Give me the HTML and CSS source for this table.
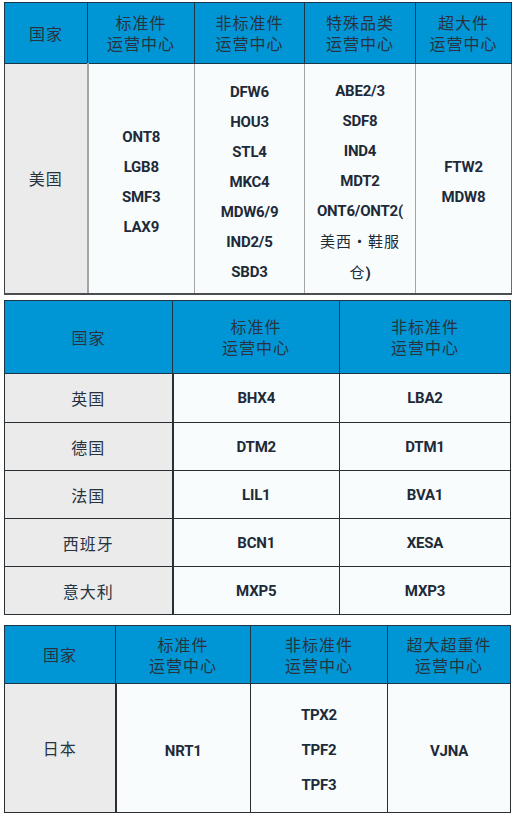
FILE: index.html
```html
<!DOCTYPE html>
<html lang="zh">
<head>
<meta charset="utf-8">
<link rel="stylesheet" href="styles.css">
</head>
<body>
<table class="tbl t1">
  <colgroup><col class="c83"><col class="c107"><col class="c110"><col class="c111"><col class="c96"></colgroup>
  <thead>
    <tr><th>国家</th><th>标准件<br>运营中心</th><th>非标准件<br>运营中心</th><th>特殊品类<br>运营中心</th><th>超大件<br>运营中心</th></tr>
  </thead>
  <tbody>
    <tr>
      <td class="country">美国</td>
      <td class="code">ONT8<br>LGB8<br>SMF3<br>LAX9</td>
      <td class="code">DFW6<br>HOU3<br>STL4<br>MKC4<br>MDW6/9<br>IND2/5<br>SBD3</td>
      <td class="code">ABE2/3<br>SDF8<br>IND4<br>MDT2<br>ONT6/ONT2(<br><span class="cjk">美西・鞋服</span><br><span class="cjk">仓</span>)</td>
      <td class="code">FTW2<br>MDW8</td>
    </tr>
  </tbody>
</table>

<table class="tbl t2">
  <colgroup><col class="c168"><col class="c167"><col class="c171"></colgroup>
  <thead>
    <tr><th>国家</th><th>标准件<br>运营中心</th><th>非标准件<br>运营中心</th></tr>
  </thead>
  <tbody>
    <tr class="r49"><td class="country">英国</td><td class="code">BHX4</td><td class="code">LBA2</td></tr>
    <tr class="r48"><td class="country">德国</td><td class="code">DTM2</td><td class="code">DTM1</td></tr>
    <tr class="r48"><td class="country">法国</td><td class="code">LIL1</td><td class="code">BVA1</td></tr>
    <tr class="r48"><td class="country">西班牙</td><td class="code">BCN1</td><td class="code">XESA</td></tr>
    <tr class="r48"><td class="country">意大利</td><td class="code">MXP5</td><td class="code">MXP3</td></tr>
  </tbody>
</table>

<table class="tbl t3">
  <colgroup><col class="c111"><col class="c135"><col class="c137"><col class="c123"></colgroup>
  <thead>
    <tr><th>国家</th><th>标准件<br>运营中心</th><th>非标准件<br>运营中心</th><th>超大超重件<br>运营中心</th></tr>
  </thead>
  <tbody>
    <tr class="r130">
      <td class="country">日本</td>
      <td class="code">NRT1</td>
      <td class="code tall">TPX2<br>TPF2<br>TPF3</td>
      <td class="code">VJNA</td>
    </tr>
  </tbody>
</table>
</body>
</html>
```

FILE: styles.css
```css
html, body {
  margin: 0;
  padding: 0;
  background: #ffffff;
}
body {
  padding: 2px 3px 0 4px;
  font-family: "Noto Sans CJK SC", sans-serif;
}
.tbl {
  width: 507px;
  border-collapse: collapse;
  table-layout: fixed;
  border: 1px solid #3a3f44;
}
.t2 {
  width: 506px;
  margin-top: 5px;
}
.t3 {
  width: 506px;
  margin-top: 10px;
}
.c83 { width: 83px; }
.c107 { width: 107px; }
.c110 { width: 110px; }
.c111 { width: 111px; }
.c96 { width: 96px; }
.c168 { width: 168px; }
.c167 { width: 167px; }
.c171 { width: 171px; }
.c135 { width: 135px; }
.c137 { width: 137px; }
.c123 { width: 123px; }

.tbl th {
  background: #0096d5;
  color: #27333f;
  font-family: "Noto Sans CJK SC", sans-serif;
  font-weight: 400;
  font-size: 16px;
  line-height: 21px;
  letter-spacing: 1px;
  text-align: center;
  vertical-align: middle;
  padding: 0;
  border: 1px solid #1d3646;
}
.t1 th { height: 60px; }
.t2 th { height: 72px; }
.t3 th { height: 57px; }

.tbl td {
  text-align: center;
  vertical-align: middle;
  padding: 0;
  border: 1px solid #2a2f34;
  background: #f8fcfd;
}
.t1 td {
  border: 1px solid #a4a4a4;
  border-bottom: 2px solid #4a4d50;
  padding: 12px 0 5px;
}
.t1 td.country { padding: 8px 0 9px; }
.t1 td:first-child { border-left: 1px solid #3a3f44; border-right: 2px solid #a4a4a4; }
.t1 td:last-child { border-right: 1px solid #6a6d70; }
.t2 td:first-child, .t3 td:first-child { border-right: 2px solid #2a2f34; }

.tbl td.country {
  background: #ebebeb;
  color: #27333f;
  font-family: "Noto Sans CJK SC", sans-serif;
  font-size: 16px;
  letter-spacing: 1px;
}
.tbl td.code {
  color: #1e2a38;
  font-family: Roboto, "Noto Sans CJK SC", sans-serif;
  font-weight: 700;
  font-size: 15px;
  letter-spacing: -0.2px;
  line-height: 30px;
}
.t3 td.tall { line-height: 35px; }
.t3 td.code { padding-top: 5px; }
.cjk {
  font-family: "Noto Sans CJK SC", sans-serif;
  font-weight: 400;
  font-size: 15px;
  letter-spacing: 1px;
}
.r49 td { height: 48px; }
.r48 td { height: 47px; }
.r130 td { height: 123px; }
```
